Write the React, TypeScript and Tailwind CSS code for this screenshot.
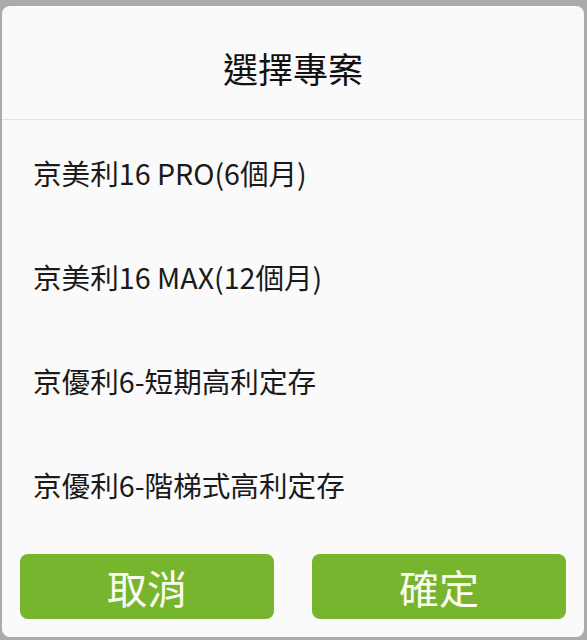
import React, { useState } from 'react';

const PROJECTS = [
  '京美利16 PRO(6個月)',
  '京美利16 MAX(12個月)',
  '京優利6-短期高利定存',
  '京優利6-階梯式高利定存',
];

const FONT = '[font-family:"Noto_Sans_CJK_TC","Noto_Sans",sans-serif]';

function App() {
  const [selected, setSelected] = useState<number | null>(null);

  return (
    <div
      className={`h-[640px] w-full bg-[#ababab] pt-[6px] pl-[2px] pr-[3px] pb-[3px] ${FONT}`}
    >
      <div className="h-full rounded-[8px] bg-[#fafafa] flex flex-col">
        <div className="h-[114px] flex items-center justify-center border-b border-[#e3e3e3]">
          <h4 className="text-[35px] text-[#111] pt-[11px]">選擇專案</h4>
        </div>

        <ul className="flex flex-col">
          {PROJECTS.map((name, i) => (
            <li
              key={name}
              onClick={() => setSelected(i)}
              className={`h-[104px] flex items-center pl-[31px] pt-[3px] text-[28.6px] text-[#1a1a1a] ${
                selected === i ? 'bg-[#f0f0f0]' : ''
              }`}
            >
              {name}
            </li>
          ))}
        </ul>

        <div className="mt-[18px] px-[18px] flex gap-[38px]">
          <button className="flex-1 h-[65px] rounded-[8px] bg-[#78b52f] text-[#fbfbf0] text-[40px] flex items-center justify-center">
            取消
          </button>
          <button className="flex-1 h-[65px] rounded-[8px] bg-[#78b52f] text-[#fbfbf0] text-[40px] flex items-center justify-center">
            確定
          </button>
        </div>
      </div>
    </div>
  );
}

export default App;
